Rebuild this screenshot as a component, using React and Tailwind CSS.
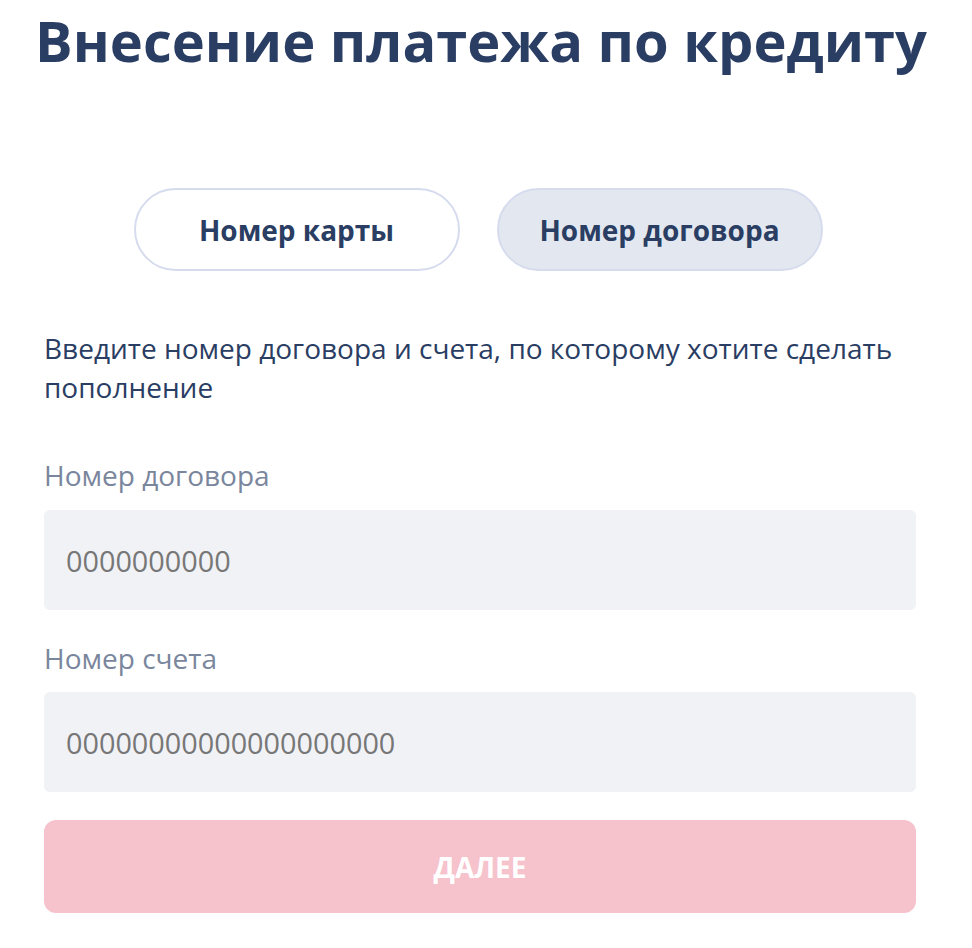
import React, { useState } from 'react';

const App = () => {
  const [mode, setMode] = useState('contract');
  const [contract, setContract] = useState('');
  const [account, setAccount] = useState('');

  const tabClass = (active) =>
    active
      ? 'w-[326px] h-[83px] rounded-full border-2 border-[#d6dcee] bg-[#e3e7ef] text-[28px] font-bold text-[#2a3d63]'
      : 'w-[326px] h-[83px] rounded-full border-2 border-[#d6dcee] bg-white text-[28px] font-bold text-[#2a3d63]';

  return (
    <div className="min-h-screen bg-white font-['Open_Sans',sans-serif]">
      {/* Title */}
      <h1 className="pt-[1px] pr-[10px] text-center text-[56px] leading-[78px] font-bold text-[#2a3d63] whitespace-nowrap">
        Внесение платежа по кредиту
      </h1>

      <div className="pl-[44px] pr-[56px]">
        {/* Tabs */}
        <div className="mt-[109px] flex justify-center gap-[37px] pr-[4px]">
          <button className={tabClass(mode === 'card')} onClick={() => setMode('card')}>
            Номер карты
          </button>
          <button className={tabClass(mode === 'contract')} onClick={() => setMode('contract')}>
            Номер договора
          </button>
        </div>

        <p className="mt-[58px] text-[28px] leading-[39px] text-[#2a3d63]">
          Введите номер договора и счета, по которому хотите сделать пополнение
        </p>

        {/* Form */}
        <div className="mt-[50px]">
          <label className="block text-[28px] leading-[36px] text-[#7a869d]">Номер договора</label>
          <input
            value={contract}
            onChange={(e) => setContract(e.target.value)}
            placeholder="0000000000"
            className="mt-[17px] w-full h-[100px] rounded-md bg-[#f1f2f6] px-[22px] text-[28.8px] text-[#2a3d63] placeholder:text-[#777777] outline-none"
          />

          <label className="mt-[30px] block text-[28px] leading-[36px] text-[#7a869d]">Номер счета</label>
          <input
            value={account}
            onChange={(e) => setAccount(e.target.value)}
            placeholder="00000000000000000000"
            className="mt-[16px] w-full h-[100px] rounded-md bg-[#f1f2f6] px-[22px] text-[28.8px] text-[#2a3d63] placeholder:text-[#777777] outline-none"
          />

          <button
            disabled
            className="mt-[28px] w-full h-[93px] rounded-xl bg-[#f6c2cc] text-[28px] font-bold text-white uppercase"
          >
            Далее
          </button>
        </div>
      </div>
    </div>
  );
};

export default App;
